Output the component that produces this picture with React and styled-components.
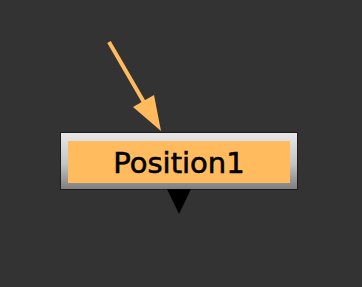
import styled, { createGlobalStyle } from "styled-components";

const Global = createGlobalStyle`
  html, body { margin: 0; padding: 0; background: #333333; }
  body { font-family: "DejaVu Sans", Verdana, sans-serif; }
`;

const Canvas = styled.div`
  position: relative;
  width: 362px;
  height: 287px;
  background: #333333;
  overflow: hidden;
`;

const Edge = styled.svg`
  position: absolute;
  left: 0;
  top: 0;
`;

const Node = styled.div`
  position: absolute;
  left: ${(p) => p.x}px;
  top: ${(p) => p.y}px;
  width: 238px;
  height: 58px;
  box-sizing: border-box;
  border: 1px solid #1c1c1c;
  background: linear-gradient(#e8e8e8, #c4c4c4 55%, #7e7e7e);
  padding: 8px 7px 6px 7px;
  display: flex;
`;

const Label = styled.div`
  flex: 1;
  background: #ffbb5e;
  color: #000;
  font-size: 29px;
  -webkit-text-stroke: 0.6px #000;
  display: flex;
  align-items: center;
  justify-content: center;
  padding-top: 2px;
`;

const Output = styled.div`
  position: absolute;
  left: 50%;
  top: 100%;
  margin-left: -12px;
  width: 0;
  height: 0;
  border-left: 12px solid transparent;
  border-right: 12px solid transparent;
  border-top: 25px solid #000;
`;

export default function App() {
  return (
    <>
      <Global />
      <Canvas>
        <Edge width="362" height="287">
          <line x1="109" y1="42" x2="145" y2="104" stroke="#ffbb5e" strokeWidth="4" />
          <polygon points="161,131 133,107 154,95" fill="#ffbb5e" />
        </Edge>
        <Node x={60} y={132}>
          <Label>Position1</Label>
          <Output />
        </Node>
      </Canvas>
    </>
  );
}
